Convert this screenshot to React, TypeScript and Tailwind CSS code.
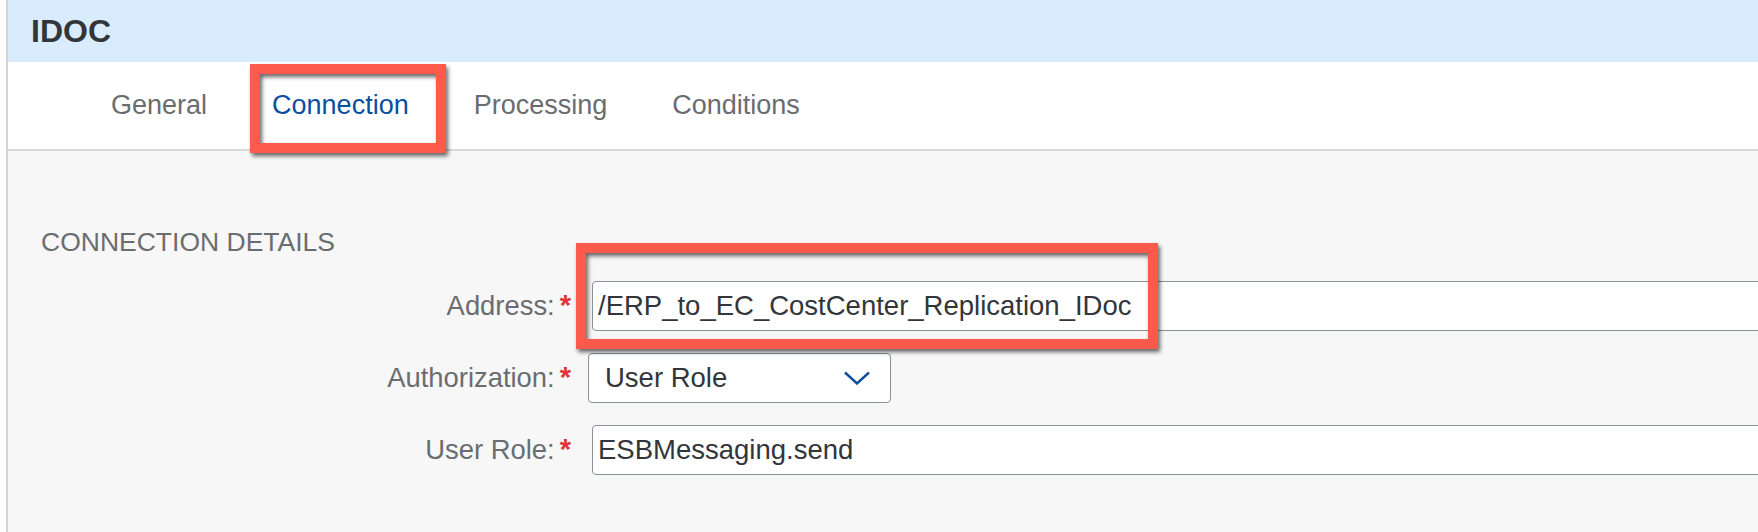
import React from "react";

const Req = () => (
  <span className="ml-[5px] font-bold text-[29px] leading-none text-[#d9363e]">*</span>
);

export default function App() {
  return (
    <div className="relative w-[1758px] h-[532px] overflow-hidden bg-white font-['Liberation_Sans',Arial,sans-serif]">
      <div className="ml-[6px] h-full border-l-2 border-[#d4d4d4] flex flex-col">
        <div className="h-[62px] bg-[#d9ecfd] flex items-center pl-[23px]">
          <span className="text-[32px] font-bold text-[#32363a] leading-none">IDOC</span>
        </div>
        <div className="h-[89px] bg-white border-b-2 border-[#d9d9d9] flex items-center pl-[103px] gap-[65px] text-[27px] text-[#6a6d70]">
          <span>General</span>
          <span className="text-[#0a4e9f]">Connection</span>
          <span>Processing</span>
          <span>Conditions</span>
        </div>
        <div className="flex-1 bg-[#f7f7f7] pl-[33px] pt-[76px]">
          <div className="text-[26.5px] leading-[30px] uppercase text-[#6a6d70]">Connection Details</div>
          <div className="mt-[24px] flex flex-col gap-[22px]">
            <div className="flex items-center h-[50px]">
              <div className="w-[530px] text-right text-[27.4px] text-[#6a6d70]">
                Address:<Req />
              </div>
              <div className="ml-[21px] mr-[-12px] flex-1 h-[50px] bg-white border-[1.5px] border-[#89919a] rounded-[4px] flex items-center pl-[5px] text-[27.5px] text-[#32363a]">
                /ERP_to_EC_CostCenter_Replication_IDoc
              </div>
            </div>
            <div className="flex items-center h-[50px]">
              <div className="w-[530px] text-right text-[27.4px] text-[#6a6d70]">
                Authorization:<Req />
              </div>
              <div className="ml-[17px] w-[303px] h-[50px] bg-white border-[1.5px] border-[#89919a] rounded-[4px] flex items-center justify-between pl-[16px] pr-[20px] text-[27.5px] text-[#32363a]">
                <span>User Role</span>
                <svg width="26" height="14" viewBox="0 0 26 14" fill="none">
                  <polyline points="1,1.5 13,12.5 25,1.5" stroke="#0a4e9f" strokeWidth="2.4" strokeLinejoin="miter" />
                </svg>
              </div>
            </div>
            <div className="flex items-center h-[50px]">
              <div className="w-[530px] text-right text-[27.4px] text-[#6a6d70]">
                User Role:<Req />
              </div>
              <div className="ml-[21px] mr-[-12px] flex-1 h-[50px] bg-white border-[1.5px] border-[#89919a] rounded-[4px] flex items-center pl-[5px] text-[27.5px] text-[#32363a]">
                ESBMessaging.send
              </div>
            </div>
          </div>
        </div>
      </div>
      <div className="absolute left-[250px] top-[64px] w-[196px] h-[89px] border-[10px] border-[#fe5a4c] [filter:drop-shadow(2px_3px_2px_rgba(0,0,0,0.6))]" />
      <div className="absolute left-[576px] top-[243px] w-[582px] h-[106px] border-[10px] border-[#fe5a4c] [filter:drop-shadow(2px_3px_2px_rgba(0,0,0,0.6))]" />
    </div>
  );
}
